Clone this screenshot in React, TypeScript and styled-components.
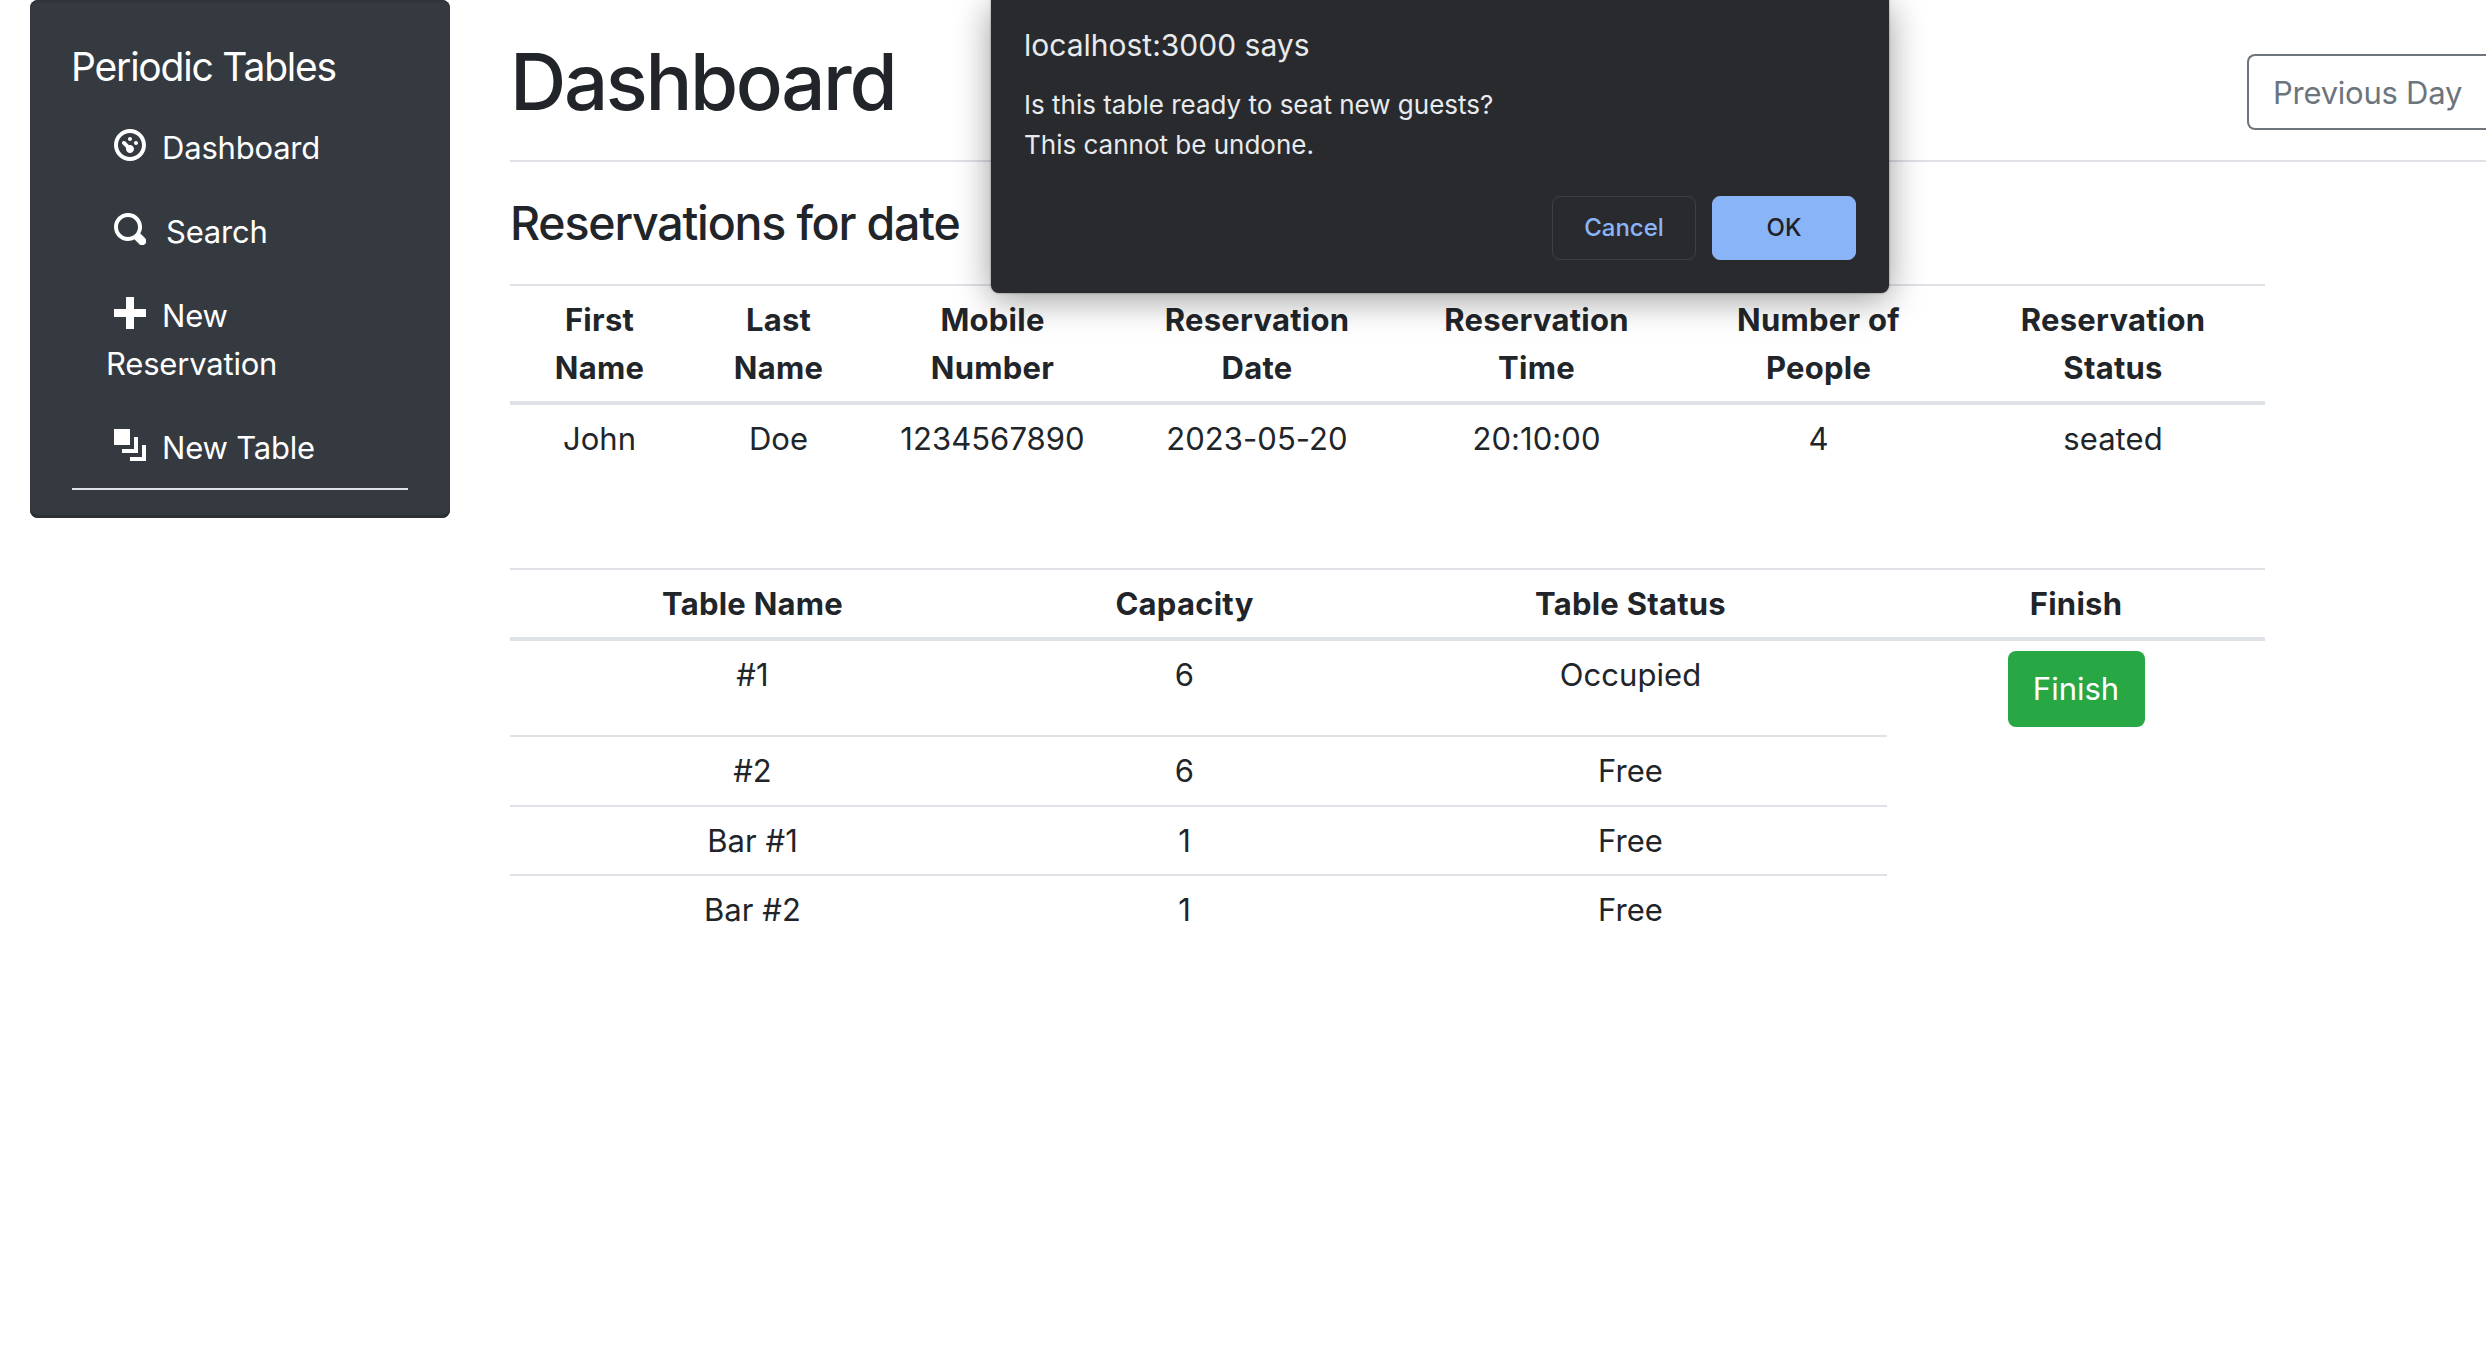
import React from "react";
import styled, { createGlobalStyle, css } from "styled-components";

const Global = createGlobalStyle`
  *, *::before, *::after { box-sizing: border-box; }
  body {
    margin: 0;
    background: #fff;
    color: #212529;
    font-family: Inter, "Liberation Sans", sans-serif;
    font-size: 31px;
    line-height: 48px;
    letter-spacing: 0.05px;
    overflow: hidden;
  }
`;

const Page = styled.div`
  display: flex;
  width: 2486px;
  height: 1348px;
  overflow: hidden;
`;

const Sidebar = styled.nav`
  flex: none;
  width: 420px;
  height: 518px;
  margin-left: 30px;
  padding: 38px 42px 0;
  border-radius: 8px;
  background: #343a40;
  box-shadow: inset 0 -3px 1px #2b3035, inset 0 2px 1px #2f3439;
  color: #fff;
`;

const Brand = styled.div`
  height: 58px;
  margin-left: -1px;
  font-size: 39px;
  line-height: 58px;
  letter-spacing: -1.2px;
`;

const Menu = styled.ul`
  margin: 12px 0 0;
  padding: 0;
  list-style: none;
  border-bottom: 2px solid #dee2e6;
  height: 382px;
`;

const MenuItem = styled.li`
  padding: 16px 44px 20px 34px;
  letter-spacing: -0.2px;
`;

const MenuIcon = styled.svg`
  width: 32px;
  height: 32px;
  margin: 0 16px 0 8px;
  fill: #fff;
  vertical-align: -2px;
`;

const MenuText = styled.span<{ $indent?: number }>`
  margin-left: ${(p) => p.$indent ?? 0}px;
`;

const Main = styled.main`
  flex: none;
  width: 1976px;
  margin-left: 60px;
`;

const Header = styled.header`
  display: flex;
  justify-content: space-between;
  align-items: flex-start;
  height: 162px;
  border-bottom: 2px solid #dee2e6;
`;

const Title = styled.h1`
  margin: 34px 0 0;
  font-size: 78px;
  line-height: 96px;
  font-weight: 500;
  letter-spacing: -2.4px;
`;

const DayButton = styled.button`
  display: block;
  width: 239px;
  height: 76px;
  margin: 54px 0 0;
  padding: 1px 0 0 24px;
  border: 2px solid #6c757d;
  border-right: 0;
  border-radius: 8px 0 0 8px;
  background: transparent;
  color: #6c757d;
  font: inherit;
  letter-spacing: -0.25px;
  text-align: left;
  white-space: nowrap;
`;

const Subtitle = styled.h4`
  height: 122px;
  margin: 0;
  padding-top: 32px;
  font-size: 46.5px;
  line-height: 58px;
  font-weight: 500;
  letter-spacing: -1.18px;
`;

const Table = styled.table<{ $gap?: number }>`
  width: 1755px;
  margin-bottom: ${(p) => p.$gap ?? 0}px;
  table-layout: fixed;
  border-collapse: separate;
  border-spacing: 0;
  text-align: center;
`;

const HeadCell = styled.th<{ $height: number }>`
  height: ${(p) => p.$height}px;
  padding: 10px 0 0;
  border-top: 2px solid #dee2e6;
  border-bottom: 4px solid #dee2e6;
  vertical-align: top;
  font-weight: 700;
  letter-spacing: 0.25px;
`;

const Cell = styled.td<{ $height: number; $line?: boolean }>`
  height: ${(p) => p.$height}px;
  padding: 10px 0 0;
  vertical-align: top;
  ${(p) =>
    p.$line &&
    css`
      border-top: 2px solid #dee2e6;
    `}
`;

const FinishButton = styled.button`
  display: block;
  width: 137px;
  height: 76px;
  margin: 0 auto;
  padding: 0;
  border: 0;
  border-radius: 8px;
  background: #28a745;
  color: #fff;
  font: inherit;
  letter-spacing: 0;
`;

const Dialog = styled.div`
  position: absolute;
  top: 0;
  left: 991px;
  width: 898px;
  height: 293px;
  padding: 25px 33px 33px;
  display: flex;
  flex-direction: column;
  border-radius: 0 0 8px 8px;
  background: #292a2d;
  box-shadow: 0 6px 36px rgba(0, 0, 0, 0.4), 0 0 2px rgba(0, 0, 0, 0.5);
  color: #e8eaed;
`;

const DialogTitle = styled.div`
  font-size: 30px;
  line-height: 40px;
  letter-spacing: 0;
`;

const DialogText = styled.p`
  margin: 20px 0 0;
  font-size: 26px;
  line-height: 40px;
  letter-spacing: 0;
`;

const DialogActions = styled.div`
  display: flex;
  justify-content: flex-end;
  gap: 16px;
  margin-top: auto;
`;

const DialogButton = styled.button<{ $primary?: boolean }>`
  width: 144px;
  height: 64px;
  padding: 0;
  border: 1px solid ${(p) => (p.$primary ? "#8ab4f8" : "#3c4043")};
  border-radius: 8px;
  background: ${(p) => (p.$primary ? "#8ab4f8" : "transparent")};
  color: ${(p) => (p.$primary ? "#202124" : "#8ab4f8")};
  font: 500 24px/1 Inter, sans-serif;
  letter-spacing: 0;
`;

const icons = {
  dashboard: (
    <path
      fillRule="evenodd"
      d="M4 0C1.8 0 0 1.8 0 4s1.8 4 4 4 4-1.8 4-4-1.8-4-4-4zm0 1c1.66 0 3 1.34 3 3s-1.34 3-3 3-3-1.34-3-3 1.34-3 3-3zm0 1c-.28 0-.5.22-.5.5s.22.5.5.5.5-.22.5-.5-.22-.5-.5-.5zm-1.66 1a.5.5 0 0 0-.19.84l.91.91c-.02.08-.06.16-.06.25 0 .55.45 1 1 1s1-.45 1-1-.45-1-1-1c-.09 0-.17.04-.25.06l-.91-.91a.5.5 0 0 0-.44-.16.5.5 0 0 0-.06 0zm3.16 0c-.28 0-.5.22-.5.5s.22.5.5.5.5-.22.5-.5-.22-.5-.5-.5z"
    />
  ),
  search: (
    <path d="M3.5 0c-1.93 0-3.5 1.57-3.5 3.5s1.57 3.5 3.5 3.5c.59 0 1.17-.14 1.66-.41a1 1 0 0 0 .13.13l1 1a1.02 1.02 0 1 0 1.44-1.44l-1-1a1 1 0 0 0-.16-.13c.27-.49.44-1.06.44-1.66 0-1.93-1.55-3.5-3.5-3.5zm0 1c1.39 0 2.5 1.11 2.5 2.5 0 .66-.24 1.27-.66 1.72-.01.01-.02.02-.03.03a1 1 0 0 0-.13.13c-.44.4-1.04.63-1.69.63-1.39 0-2.5-1.11-2.5-2.5s1.11-2.5 2.5-2.5z" />
  ),
  plus: <path d="M3 0v3h-3v2h3v3h2v-3h3v-2h-3v-3h-2z" />,
  layers: <path d="M0 0v4h4v-4h-4zm5 2v3h-3v1h4v-4h-1zm2 2v3h-3v1h4v-4h-1z" />,
};

const menu: { icon: keyof typeof icons; label: string; indent?: number }[] = [
  { icon: "dashboard", label: "Dashboard" },
  { icon: "search", label: "Search", indent: 4 },
  { icon: "plus", label: "New Reservation" },
  { icon: "layers", label: "New Table" },
];

const reservationColumns: [string, string, number][] = [
  ["First", "Name", 179],
  ["Last", "Name", 179],
  ["Mobile", "Number", 249],
  ["Reservation", "Date", 280],
  ["Reservation", "Time", 279],
  ["Number of", "People", 285],
  ["Reservation", "Status", 304],
];

const reservation = ["John", "Doe", "1234567890", "2023-05-20", "20:10:00", "4", "seated"];

const tableColumns: [string, number][] = [
  ["Table Name", 485],
  ["Capacity", 379],
  ["Table Status", 513],
  ["Finish", 378],
];

const tables = [
  { name: "#1", capacity: 6, status: "Occupied", height: 94 },
  { name: "#2", capacity: 6, status: "Free", height: 70 },
  { name: "Bar #1", capacity: 1, status: "Free", height: 69 },
  { name: "Bar #2", capacity: 1, status: "Free", height: 69 },
];

export default function App() {
  return (
    <Page>
      <Global />
      <Sidebar>
        <Brand>Periodic Tables</Brand>
        <Menu>
          {menu.map((m) => (
            <MenuItem key={m.label}>
              <MenuIcon viewBox="0 0 8 8">{icons[m.icon]}</MenuIcon>
              <MenuText $indent={m.indent}>{m.label}</MenuText>
            </MenuItem>
          ))}
        </Menu>
      </Sidebar>
      <Main>
        <Header>
          <Title>Dashboard</Title>
          <DayButton>Previous Day</DayButton>
        </Header>
        <Subtitle>Reservations for date</Subtitle>
        <Table $gap={95}>
          <colgroup>
            {reservationColumns.map(([, , w], i) => (
              <col key={i} width={w} />
            ))}
          </colgroup>
          <thead>
            <tr>
              {reservationColumns.map(([a, b], i) => (
                <HeadCell key={i} $height={121}>
                  {a}
                  <br />
                  {b}
                </HeadCell>
              ))}
            </tr>
          </thead>
          <tbody>
            <tr>
              {reservation.map((v) => (
                <Cell key={v} $height={68}>
                  {v}
                </Cell>
              ))}
            </tr>
          </tbody>
        </Table>
        <Table>
          <colgroup>
            {tableColumns.map(([name, w]) => (
              <col key={name} width={w} />
            ))}
          </colgroup>
          <thead>
            <tr>
              {tableColumns.map(([name]) => (
                <HeadCell key={name} $height={73}>
                  {name}
                </HeadCell>
              ))}
            </tr>
          </thead>
          <tbody>
            {tables.map((t, i) => (
              <tr key={t.name}>
                {[t.name, t.capacity, t.status].map((v, n) => (
                  <Cell key={n} $height={t.height} $line={i > 0}>
                    {v}
                  </Cell>
                ))}
                {t.status === "Occupied" && (
                  <Cell $height={t.height}>
                    <FinishButton>Finish</FinishButton>
                  </Cell>
                )}
              </tr>
            ))}
          </tbody>
        </Table>
      </Main>
      <Dialog role="dialog">
        <DialogTitle>localhost:3000 says</DialogTitle>
        <DialogText>
          Is this table ready to seat new guests?
          <br />
          This cannot be undone.
        </DialogText>
        <DialogActions>
          <DialogButton>Cancel</DialogButton>
          <DialogButton $primary>OK</DialogButton>
        </DialogActions>
      </Dialog>
    </Page>
  );
}
